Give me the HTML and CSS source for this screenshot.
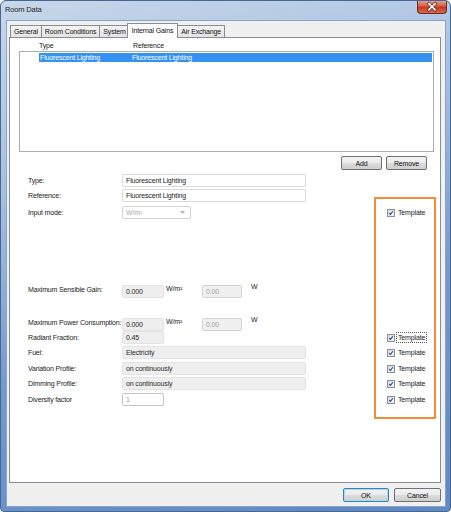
FILE: index.html
```html
<!DOCTYPE html>
<html lang="en">
<head>
    <meta charset="UTF-8">
    <meta name="viewport" content="width=device-width, initial-scale=1.0">
    <title>Room Data</title>
    <link rel="stylesheet" href="styles.css">
</head>
<body>
    <div class="window">
        <div class="titlebar">
            <span class="title">Room Data</span>
            <button class="close-btn" aria-label="Close">
                <svg width="30" height="14" viewBox="0 0 30 14">
                    <path d="M11.5 3.5 L18.5 10 M18.5 3.5 L11.5 10" stroke="#5b1e14" stroke-width="3.2" stroke-linecap="square"/>
                    <path d="M11.5 3.5 L18.5 10 M18.5 3.5 L11.5 10" stroke="#fff" stroke-width="1.8" stroke-linecap="square"/>
                </svg>
            </button>
        </div>

        <div class="client">
            <div class="tabs">
                <div class="tab">General</div>
                <div class="tab">Room Conditions</div>
                <div class="tab">System</div>
                <div class="tab active">Internal Gains</div>
                <div class="tab">Air Exchange</div>
            </div>

            <div class="page">
                <!-- gains list -->
                <div class="list-head">
                    <span class="col-type">Type</span>
                    <span class="col-ref">Reference</span>
                </div>
                <div class="listbox">
                    <div class="list-row selected">
                        <span class="col-type">Fluorescent Lighting</span>
                        <span class="col-ref">Fluorescent Lighting</span>
                    </div>
                </div>
                <div class="list-actions">
                    <button class="btn">Add</button>
                    <button class="btn">Remove</button>
                </div>

                <!-- details of the selected gain -->
                <div class="form">
                    <div class="row row-type">
                        <span class="lbl">Type:</span>
                        <div class="field wide">Fluorescent Lighting</div>
                    </div>
                    <div class="row row-ref">
                        <span class="lbl">Reference:</span>
                        <div class="field wide">Fluorescent Lighting</div>
                    </div>
                    <div class="row row-mode">
                        <span class="lbl">Input mode:</span>
                        <div class="field select">
                            <span>W/m²</span>
                            <svg width="5" height="3" viewBox="0 0 5 3"><path d="M0 0 L5 0 L2.5 3 Z" fill="#b4b4b4"/></svg>
                        </div>
                        <label class="tpl">
                            <span class="check"><svg viewBox="0 0 8 8"><path d="M1.6 4.1 L3.2 5.9 L6.5 1.6"/></svg></span>
                            <span class="tpl-text">Template</span>
                        </label>
                    </div>
                    <div class="row row-sens">
                        <span class="lbl">Maximum Sensible Gain:</span>
                        <div class="pair">
                            <div class="field short readonly">0.000</div>
                            <span class="unit">W/m²</span>
                            <div class="field small disabled">0.00</div>
                            <span class="unit unit-w">W</span>
                        </div>
                    </div>
                    <div class="row row-power">
                        <span class="lbl">Maximum Power Consumption:</span>
                        <div class="pair">
                            <div class="field short readonly">0.000</div>
                            <span class="unit">W/m²</span>
                            <div class="field small disabled">0.00</div>
                            <span class="unit unit-w">W</span>
                        </div>
                    </div>
                    <div class="row row-radiant">
                        <span class="lbl">Radiant Fraction:</span>
                        <div class="field short readonly">0.45</div>
                        <label class="tpl focus">
                            <span class="check"><svg viewBox="0 0 8 8"><path d="M1.6 4.1 L3.2 5.9 L6.5 1.6"/></svg></span>
                            <span class="tpl-text">Template</span>
                        </label>
                    </div>
                    <div class="row row-fuel">
                        <span class="lbl">Fuel:</span>
                        <div class="field wide readonly">Electricity</div>
                        <label class="tpl">
                            <span class="check"><svg viewBox="0 0 8 8"><path d="M1.6 4.1 L3.2 5.9 L6.5 1.6"/></svg></span>
                            <span class="tpl-text">Template</span>
                        </label>
                    </div>
                    <div class="row row-var">
                        <span class="lbl">Variation Profile:</span>
                        <div class="field wide readonly">on continuously</div>
                        <label class="tpl">
                            <span class="check"><svg viewBox="0 0 8 8"><path d="M1.6 4.1 L3.2 5.9 L6.5 1.6"/></svg></span>
                            <span class="tpl-text">Template</span>
                        </label>
                    </div>
                    <div class="row row-dim">
                        <span class="lbl">Dimming Profile:</span>
                        <div class="field wide readonly">on continuously</div>
                        <label class="tpl">
                            <span class="check"><svg viewBox="0 0 8 8"><path d="M1.6 4.1 L3.2 5.9 L6.5 1.6"/></svg></span>
                            <span class="tpl-text">Template</span>
                        </label>
                    </div>
                    <div class="row row-div">
                        <span class="lbl">Diversity factor</span>
                        <div class="field short faded">1</div>
                        <label class="tpl">
                            <span class="check"><svg viewBox="0 0 8 8"><path d="M1.6 4.1 L3.2 5.9 L6.5 1.6"/></svg></span>
                            <span class="tpl-text">Template</span>
                        </label>
                    </div>

                    <!-- orange frame round the template switches -->
                    <div class="highlight"></div>
                </div>
            </div>

            <div class="footer">
                <button class="btn default ok">OK</button>
                <button class="btn cancel">Cancel</button>
            </div>
        </div>
    </div>
</body>
</html>
```

FILE: styles.css
```css
*{
    box-sizing: border-box;
}
body{
    margin: 0;
    background-color: #fff;
    font-family: "Liberation Sans", Arial, sans-serif;
    font-size: 7px;
    letter-spacing: -0.15px;
    color: #1c1c1c;
}

/* window frame */
.window{
    width: 451px;
    height: 512px;
    display: flex;
    flex-direction: column;
    border: 1px solid #46678f;
    border-radius: 6px 6px 4px 4px;
    background: linear-gradient(165deg, #c8d7ea 0%, #a7c0e1 30%, #7399cf 62%, #5f88c5 100%);
    overflow: hidden;
}
.titlebar{
    height: 19px;
    display: flex;
    justify-content: space-between;
    align-items: flex-start;
    padding-left: 4px;
}
.title{
    font-size: 7.5px;
    line-height: 18px;
    color: #1e1e1e;
}
.close-btn{
    width: 30px;
    height: 14px;
    margin-top: -1px;
    margin-right: 3px;
    padding: 0;
    border: 1px solid #6c2a20;
    border-top: none;
    border-radius: 0 0 4px 4px;
    background: linear-gradient(#e6a89b 0%, #d2634d 45%, #c2391f 55%, #d76a50 100%);
    display: flex;
}

.client{
    flex: 1;
    margin: 0 4px 4px 5px;
    background-color: #f0f0f0;
    border: 1px solid #8aa4c8;
    padding: 2px 4px 4px 2px;
    display: flex;
    flex-direction: column;
}

/* tabs */
.tabs{
    height: 14px;
    display: flex;
    align-items: flex-end;
    padding-left: 1px;
}
.tab{
    height: 12px;
    line-height: 11px;
    padding: 0 3px;
    margin-right: -1px;
    border: 1px solid #898c95;
    border-bottom: none;
    background: linear-gradient(#f4f4f4, #e4e4e4);
    color: #111;
}
.tab.active{
    height: 15px;
    margin: 0 -1px -1px -2px;
    padding: 1px 4px 0;
    background: #fff;
    position: relative;
    z-index: 1;
}

.page{
    flex: 1;
    background-color: #fff;
    border: 1px solid #898c95;
    padding: 3px 6px 0 9px;
}

/* list */
.list-head{
    height: 10px;
    line-height: 10px;
    display: flex;
    padding-left: 20px;
    color: #222;
}
.list-head .col-type{
    width: 94px;
}
.listbox{
    height: 101px;
    border: 1px solid #a9aeb6;
    padding: 1px 1px 0 19px;
}
.list-row{
    height: 9px;
    line-height: 9px;
    display: flex;
}
.list-row.selected{
    background-color: #3592f3;
    color: #fff;
}
.list-row .col-type{
    width: 93px;
    padding-left: 1px;
}
.list-actions{
    display: flex;
    justify-content: flex-end;
    gap: 4px;
    margin-top: 4px;
    padding-right: 7px;
}

.btn{
    width: 41px;
    height: 14px;
    padding: 0;
    font-family: inherit;
    font-size: 7px;
    letter-spacing: -0.15px;
    color: #111;
    border: 1px solid #707070;
    border-radius: 2px;
    background: linear-gradient(#f3f3f3 0%, #ebebeb 48%, #dcdcdc 52%, #cfcfcf 100%);
}

/* form */
.form{
    position: relative;
    margin: 4px 0 0 9px;
}
.row{
    height: 15px;
    display: grid;
    grid-template-columns: 94px 184px 68px 62px;
    align-items: start;
}
.row-ref{ height: 17px; }
.row-mode{ height: 13px; margin-bottom: 66px; }
.row-sens{ height: 33px; }
.row-power{ height: 13px; }
.row-fuel{ height: 16px; }
.row-dim{ height: 16px; }
.row-div{ height: 13px; }

.lbl{
    line-height: 13px;
    color: #222;
}
.row-sens .lbl,
.row-power .lbl{
    line-height: 9px;
}

.field{
    height: 13px;
    line-height: 11px;
    padding: 0 3px;
    border: 1px solid #d9d9d9;
    border-radius: 2px;
    background-color: #fff;
    white-space: nowrap;
}
.field.wide{ width: 184px; }
.field.short{ width: 42px; }
.field.small{ width: 40px; }
.field.readonly{
    background-color: #eeeeee;
    border-color: #e3e3e3;
    color: #2a2a2a;
}
.field.disabled{
    background-color: #f0f0f0;
    border-color: #d3d3d3;
    color: #a3a3a3;
}
.field.faded{
    border-color: #c4c4c4;
    color: #9a9a9a;
}
.field.select{
    width: 69px;
    display: flex;
    justify-content: space-between;
    align-items: center;
    padding: 0 5px 0 3px;
    color: #a8a8a8;
    border-color: #d2d2d2;
}

.pair{
    display: flex;
    align-items: flex-start;
}
.unit{
    width: 38px;
    padding-left: 2px;
    line-height: 8px;
    color: #222;
}
.unit-w{
    width: auto;
    padding-left: 9px;
    margin-top: -2px;
}

/* template switches */
.tpl{
    grid-column: 4;
    height: 13px;
    display: flex;
    align-items: center;
    gap: 3px;
    padding-left: 13px;
    color: #222;
}
.check{
    width: 8px;
    height: 8px;
    border: 1px solid #8c8f94;
    background: linear-gradient(135deg, #d5dde8, #f4f6f9);
    display: flex;
}
.check svg{
    width: 6px;
    height: 6px;
}
.check path{
    fill: none;
    stroke: #2b3f80;
    stroke-width: 1.4;
}
.tpl.focus .tpl-text{
    outline: 1px dotted #555;
    outline-offset: 1px;
}

.highlight{
    position: absolute;
    left: 346px;
    top: 23px;
    width: 62px;
    height: 222px;
    border: 2px solid #f68b34;
    pointer-events: none;
}

/* dialog buttons */
.footer{
    display: flex;
    justify-content: flex-end;
    gap: 5px;
    margin-top: 5px;
}
.ok{
    width: 46px;
    border-color: #3c7fb1;
    box-shadow: inset 0 0 0 1px #a6dcf7;
}
.cancel{
    width: 47px;
}
```
